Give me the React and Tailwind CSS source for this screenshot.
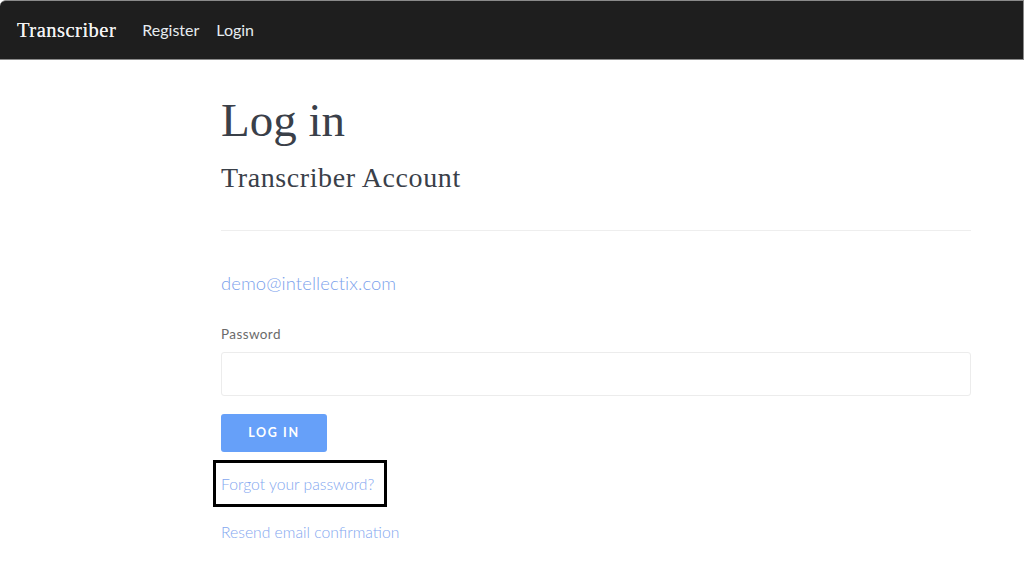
export default function App() {
  return (
    <div className="min-h-[588px] bg-white font-['Lato',sans-serif]">
      <nav className="h-[60px] bg-[#1e1e1e] border-t border-b border-r border-[#8a8a8a] rounded-tl-[6px] flex items-center pl-[17px]">
        <span className="font-['Liberation_Serif',serif] text-[20.5px] text-[#f2f2f2] tracking-[0.5px] [text-shadow:0_0_0.6px_#f2f2f2]">Transcriber</span>
        <span className="ml-[26px] text-[16px] text-[#e6ecf0]">Register</span>
        <span className="ml-[17px] text-[16px] text-[#e6ecf0]">Login</span>
      </nav>
      <main className="ml-[221px] w-[750px] flex flex-col">
        <h1 className="mt-[32px] font-['Liberation_Serif',serif] text-[47px] leading-[56px] text-[#3a4049]">Log in</h1>
        <h2 className="mt-[13px] font-['Liberation_Serif',serif] text-[28px] leading-[34px] text-[#3a4049] tracking-[0.6px]">Transcriber Account</h2>
        <div className="mt-[35px] h-px bg-[#eeeeee]" />
        <a className="mt-[40px] text-[18.4px] leading-[24px] font-light text-[#7ba1ec] tracking-[0.1px]">demo@intellectix.com</a>
        <label className="mt-[30px] text-[13.5px] leading-[18px] text-[#6b6b6b] tracking-[0.4px]">Password</label>
        <input type="password" className="mt-[9px] h-[44px] border border-[#ececec] rounded-[3px] outline-none" />
        <button className="mt-[18px] w-[106px] h-[38px] bg-[#66a0f9] rounded-[3px] text-white text-[12.5px] font-bold tracking-[1.6px]">LOG IN</button>
        <div className="mt-[8px] -ml-[8px] w-[174px] h-[47px] border-[3px] border-black flex items-center pl-[5px] pt-[3px]">
          <a className="text-[15.7px] font-light text-[#84a7ef]">Forgot your password?</a>
        </div>
        <a className="mt-[14px] text-[15.7px] font-light text-[#84a7ef]">Resend email confirmation</a>
      </main>
    </div>
  );
}
